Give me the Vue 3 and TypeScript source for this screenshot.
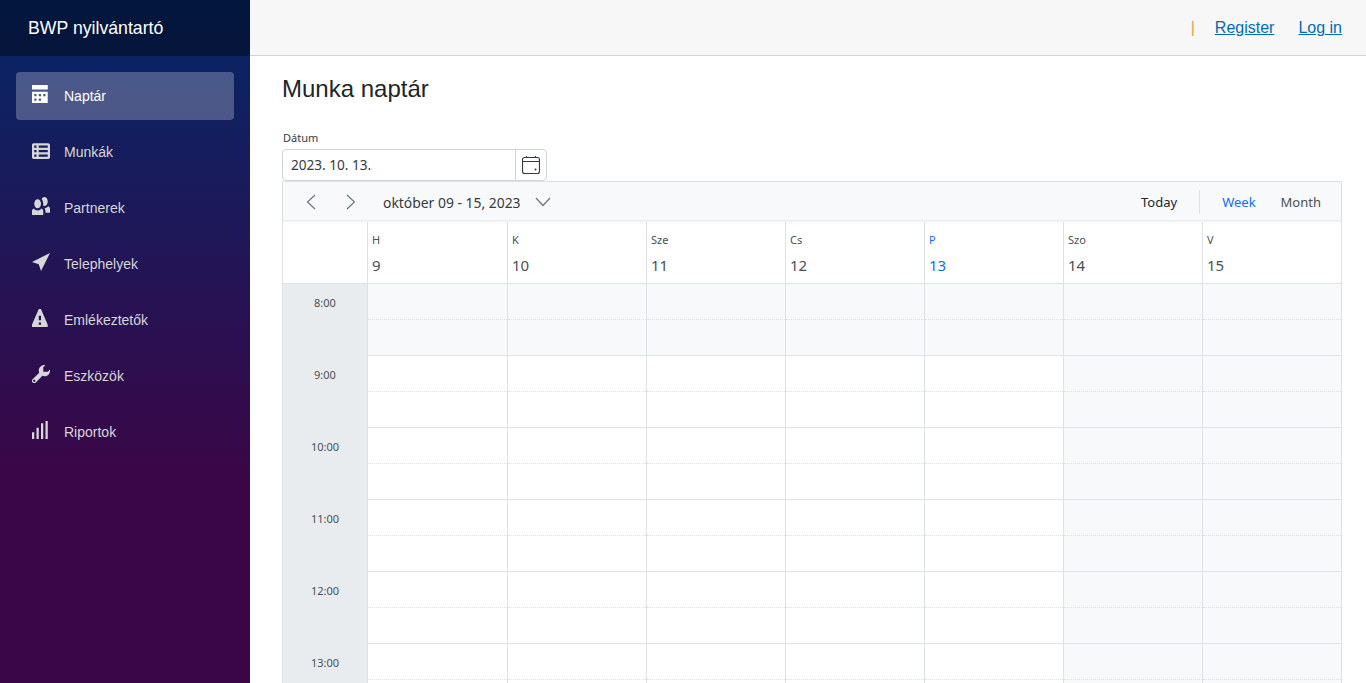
<template>
  <div class="page">
    <aside class="sidebar">
      <div class="brand">BWP nyilvántartó</div>
      <nav class="nav">
        <a v-for="item in navItems" :key="item.label" class="nav-link" :class="{ active: item.active }">
          <svg class="nav-icon" width="18" height="18" :viewBox="item.box || '0 0 8 8'" fill="currentColor">
            <path :d="item.icon" />
          </svg>
          <span>{{ item.label }}</span>
        </a>
      </nav>
    </aside>

    <div class="content">
      <div class="top-row">
        <span class="sep">|</span>
        <a class="top-link">Register</a>
        <a class="top-link">Log in</a>
      </div>

      <main class="main">
        <h1>Munka naptár</h1>

        <div class="field">
          <label>Dátum</label>
          <div class="date-input">
            <span class="date-value">2023. 10. 13.</span>
            <span class="date-btn">
              <svg width="18" height="18" viewBox="0 0 18 18" fill="none" stroke="#343a40" stroke-width="1.1">
                <rect x="0.55" y="1.55" width="16.9" height="15.9" rx="2" />
                <path d="M0.5 5.5h17M4.5 0v2M13.5 0v2" />
                <circle cx="13.5" cy="13.5" r="1" fill="#343a40" stroke="none" />
              </svg>
            </span>
          </div>
        </div>

        <section class="scheduler">
          <div class="toolbar">
            <button class="tool-icon">
              <svg width="10" height="16" viewBox="0 0 10 16" fill="none" stroke="#6c757d" stroke-width="1.2">
                <path d="M9 1L1.5 8 9 15" />
              </svg>
            </button>
            <button class="tool-icon">
              <svg width="10" height="16" viewBox="0 0 10 16" fill="none" stroke="#6c757d" stroke-width="1.2">
                <path d="M1 1l7.5 7L1 15" />
              </svg>
            </button>
            <span class="range">október 09 - 15, 2023</span>
            <svg class="range-caret" width="16" height="10" viewBox="0 0 16 10" fill="none" stroke="#6c757d" stroke-width="1.2">
              <path d="M1 1l7 7.5L15 1" />
            </svg>
            <span class="spacer"></span>
            <span class="tool-text">Today</span>
            <span class="tool-sep"></span>
            <span class="tool-text week">Week</span>
            <span class="tool-text month">Month</span>
          </div>

          <div class="grid-row head">
            <div class="corner"></div>
            <div v-for="day in days" :key="day.num" class="day-head" :class="{ today: day.today }">
              <span class="day-name">{{ day.name }}</span>
              <span class="day-num">{{ day.num }}</span>
            </div>
          </div>

          <div v-for="hour in hours" :key="hour" class="grid-row hour">
            <div class="time"><span>{{ hour }}:00</span></div>
            <div
              v-for="day in days"
              :key="day.num"
              class="day-col"
              :class="{ off: hour < 9 || day.num >= 14 }"
            >
              <div class="slot dotted"></div>
              <div class="slot"></div>
            </div>
          </div>
        </section>
      </main>
    </div>
  </div>
</template>

<script setup lang="ts">
interface NavItem {
  label: string;
  icon: string;
  box?: string;
  active?: boolean;
}

interface Day {
  name: string;
  num: number;
  today?: boolean;
}

const navItems: NavItem[] = [
  {
    label: 'Naptár',
    active: true,
    icon: 'M0 0v2h7v-2h-7zm0 3v4.91c0 .05.04.09.09.09h6.81c.05 0 .09-.04.09-.09v-4.91h-7zm1 1h1v1h-1v-1zm2 0h1v1h-1v-1zm2 0h1v1h-1v-1zm-4 2h1v1h-1v-1zm2 0h1v1h-1v-1z'
  },
  {
    label: 'Munkák',
    box: '0 -1 8 8',
    icon: 'M.75 0c-.41 0-.75.34-.75.75v5.5c0 .41.34.75.75.75h6.5c.41 0 .75-.34.75-.75v-5.5c0-.41-.34-.75-.75-.75h-6.5zm.25 1h1v1h-1v-1zm2 0h4v1h-4v-1zm-2 2h1v1h-1v-1zm2 0h4v1h-4v-1zm-2 2h1v1h-1v-1zm2 0h4v1h-4v-1z'
  },
  {
    label: 'Partnerek',
    icon: 'M5.5 0c-.51 0-.95.35-1.22.88.45.54.72 1.28.72 2.13 0 .29-.03.55-.09.81.19.11.38.19.59.19.83 0 1.5-.9 1.5-2s-.67-2-1.5-2zm-3 1c-.83 0-1.5.9-1.5 2s.67 2 1.5 2 1.5-.9 1.5-2-.67-2-1.5-2zm4.75 3.16c-.43.51-1.02.82-1.69.84.27.38.44.84.44 1.34v.66h2v-1.66c0-.52-.31-.97-.75-1.19zm-6.5 1c-.44.22-.75.67-.75 1.19v1.66h5v-1.66c0-.52-.31-.97-.75-1.19-.45.53-1.06.84-1.75.84s-1.3-.32-1.75-.84z'
  },
  {
    label: 'Telephelyek',
    icon: 'M8 0l-8 4 3 1 1 3 4-8z'
  },
  {
    label: 'Emlékeztetők',
    icon: 'M3.09 0c-.06 0-.1.04-.13.09l-2.94 6.81c-.02.05-.03.13-.03.19v.81c0 .05.04.09.09.09h6.81c.05 0 .09-.04.09-.09v-.81c0-.05-.01-.14-.03-.19l-2.94-6.81c-.02-.05-.07-.09-.13-.09h-.81zm-.09 3h1v2h-1v-2zm0 3h1v1h-1v-1z'
  },
  {
    label: 'Eszközök',
    icon: 'M5.5 0c-1.38 0-2.5 1.12-2.5 2.5 0 .32.08.62.19.91l-2.91 2.88c-.39.39-.39 1.05 0 1.44.2.2.46.28.72.28.26 0 .52-.09.72-.28l2.88-2.91c.28.11.58.19.91.19 1.38 0 2.5-1.12 2.5-2.5 0-.16 0-.32-.03-.47l-.97.97h-2v-2l.97-.97c-.15-.03-.31-.03-.47-.03zm-4.5 6.5c.28 0 .5.22.5.5s-.22.5-.5.5-.5-.22-.5-.5.22-.5.5-.5z'
  },
  {
    label: 'Riportok',
    icon: 'M6 0v8h1v-8h-1zm-2 1v7h1v-7h-1zm-2 2v5h1v-5h-1zm-2 2v3h1v-3h-1z'
  }
];

const days: Day[] = [
  { name: 'H', num: 9 },
  { name: 'K', num: 10 },
  { name: 'Sze', num: 11 },
  { name: 'Cs', num: 12 },
  { name: 'P', num: 13, today: true },
  { name: 'Szo', num: 14 },
  { name: 'V', num: 15 }
];

const hours: number[] = [8, 9, 10, 11, 12, 13];
</script>

<style scoped>
.page {
  display: flex;
  height: 100vh;
  overflow: hidden;
  font-family: 'Liberation Sans', Arial, sans-serif;
  color: #212529;
}

.sidebar {
  flex: 0 0 250px;
  background-image: linear-gradient(180deg, rgb(5, 39, 103) 0%, #3a0647 70%);
}

.brand {
  height: 56px;
  padding-left: 28px;
  line-height: 56px;
  font-size: 17.7px;
  color: #fff;
  background: rgba(0, 0, 0, 0.4);
}

.nav {
  display: flex;
  flex-direction: column;
  gap: 8px;
  padding: 16px 16px 0;
}

.nav-link {
  display: flex;
  align-items: center;
  height: 48px;
  padding-left: 16px;
  border-radius: 4px;
  font-size: 14px;
  color: #d7d7d7;
}

.nav-link.active {
  background: rgba(255, 255, 255, 0.25);
  color: #fff;
}

.nav-icon {
  flex: none;
  margin: 0 14px 4px 0;
}

.content {
  flex: 1;
  min-width: 0;
}

.top-row {
  display: flex;
  align-items: center;
  justify-content: flex-end;
  gap: 20px;
  box-sizing: border-box;
  height: 56px;
  padding-right: 24px;
  background: #f7f7f7;
  border-bottom: 1px solid #d6d5d5;
}

.sep {
  font-size: 16px;
  color: #e0a54a;
}

.top-link {
  font-size: 16px;
  color: #006bb7;
  text-decoration: underline;
}

.top-link + .top-link {
  margin-left: 4px;
}

.main {
  padding: 15px 24px 0 32px;
}

h1 {
  margin: 0;
  font-size: 24px;
  font-weight: 400;
  line-height: 36px;
}

.field {
  margin-top: 22px;
  font-family: 'Noto Sans', sans-serif;
}

.field label {
  display: block;
  margin: 0 0 2px 1px;
  font-size: 11px;
  line-height: 18px;
  color: #343a40;
}

.date-input {
  display: flex;
  box-sizing: border-box;
  width: 265px;
  height: 32px;
  border: 1px solid #ced4da;
  border-radius: 4px;
  background: #fff;
}

.date-value {
  flex: 1;
  padding-left: 8px;
  font-size: 13.6px;
  line-height: 30px;
  color: #343a40;
}

.date-btn {
  display: flex;
  align-items: center;
  justify-content: center;
  width: 30px;
  border-left: 1px solid #ced4da;
}

.scheduler {
  box-sizing: border-box;
  width: 1060px;
  border: 1px solid #dee2e6;
  border-bottom: none;
  font-family: 'Noto Sans', sans-serif;
}

.toolbar {
  display: flex;
  align-items: center;
  box-sizing: border-box;
  height: 39px;
  padding: 2px 20px 0 16px;
  background: #f8f9fa;
  border-bottom: 1px solid #e9ecef;
  box-shadow: 0 1px 2px rgba(0, 0, 0, 0.06);
  font-size: 13px;
  color: #212529;
}

.tool-icon {
  display: flex;
  align-items: center;
  justify-content: center;
  width: 24px;
  height: 24px;
  margin-right: 16px;
  padding: 0;
  border: none;
  background: none;
}

.range {
  margin-left: 4px;
  font-size: 13.9px;
  color: #343a40;
}

.range-caret {
  margin-left: 14px;
}

.spacer {
  flex: 1;
}

.tool-sep {
  width: 1px;
  height: 24px;
  margin: 0 22px;
  background: #dee2e6;
}

.week {
  margin-right: 25px;
  color: #0d6efd;
}

.month {
  color: #495057;
}

.grid-row {
  display: grid;
  grid-template-columns: 84px 140px repeat(6, 139px);
}

.head {
  box-sizing: border-box;
  height: 62px;
  margin-top: 1px;
  border-bottom: 1px solid #dee2e6;
}

.day-head {
  display: flex;
  flex-direction: column;
  padding-left: 4px;
  border-left: 1px solid #dee2e6;
  color: #495057;
}

.day-head.today {
  color: #0d6efd;
}

.day-name {
  margin-top: 9px;
  font-size: 11px;
  line-height: 18px;
}

.day-num {
  margin-top: 4px;
  font-size: 15px;
  line-height: 24px;
}

.time {
  padding-top: 10px;
  background: #e9ecef;
  font-size: 11px;
  line-height: 18px;
  text-align: center;
  color: #495057;
}

.day-col {
  border-left: 1px solid #dee2e6;
}

.day-col.off {
  background: #f8f9fa;
}

.slot {
  box-sizing: border-box;
  height: 36px;
  border-bottom: 1px solid #dee2e6;
}

.slot.dotted {
  border-bottom-style: dotted;
}
</style>

<style>
html,
body {
  margin: 0;
  overflow: hidden;
}
</style>
